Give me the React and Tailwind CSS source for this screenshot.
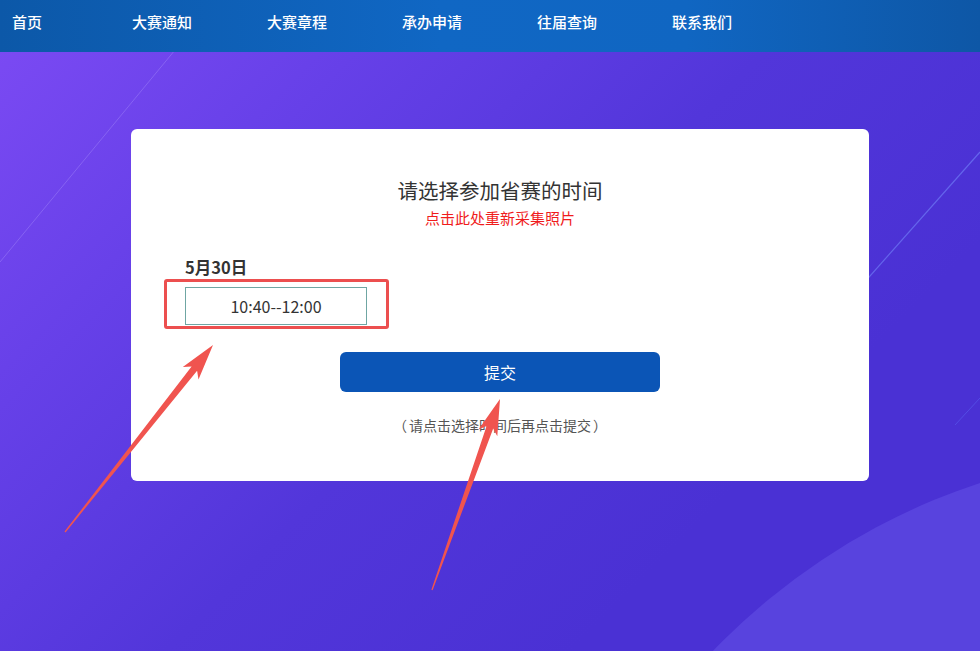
import { useState } from 'react';

const NAV_ITEMS = [
  { label: '首页', w: 'w-[120px]' },
  { label: '大赛通知', w: 'w-[135px]' },
  { label: '大赛章程', w: 'w-[135px]' },
  { label: '承办申请', w: 'w-[135px]' },
  { label: '往届查询', w: 'w-[135px]' },
  { label: '联系我们', w: 'w-[135px]' },
];

// 批注箭头：从 tail 指向 tip，尾部细、头部带倒钩
const arrowPoints = (tail, tip) => {
  const dx = tip[0] - tail[0];
  const dy = tip[1] - tail[1];
  const len = Math.hypot(dx, dy);
  const ux = dx / len;
  const uy = dy / len;
  const nx = -uy;
  const ny = ux;
  const headLen = 30;
  const neck = [tip[0] - ux * headLen, tip[1] - uy * headLen];
  const barb = [tip[0] - ux * (headLen + 6), tip[1] - uy * (headLen + 6)];
  const p = (base, off) => `${(base[0] + nx * off).toFixed(1)},${(base[1] + ny * off).toFixed(1)}`;
  return [
    p(tail, 0.6),
    p(neck, 3.5),
    p(barb, 10),
    `${tip[0]},${tip[1]}`,
    p(barb, -10),
    p(neck, -3.5),
    p(tail, -0.6),
  ].join(' ');
};

const Arrow = ({ tail, tip }) => (
  <polygon points={arrowPoints(tail, tip)} fill="#f0544f" />
);

export default function App() {
  const [selected, setSelected] = useState(false);

  return (
    <div
      className="relative w-[980px] h-[651px] overflow-hidden bg-[linear-gradient(135deg,#7d4bf4_0%,#6640e8_25%,#5236da_50%,#4a31d4_75%,#4a31d4_100%)]"
      style={{ fontFamily: '"Noto Sans CJK SC", "Noto Sans", sans-serif' }}
    >
      {/* 背景装饰：斜线与右下角圆 */}
      <svg className="absolute inset-0 pointer-events-none" width="980" height="651">
        <circle cx="1185" cy="1105" r="655" fill="#5843de" />
        <line x1="0" y1="262" x2="175" y2="50" stroke="#9a7cf8" strokeWidth="1" opacity="0.55" />
        <line x1="760" y1="400" x2="980" y2="152" stroke="#6b72f2" strokeWidth="1.2" opacity="0.8" />
        <line x1="955" y1="425" x2="980" y2="398" stroke="#5a5ff0" strokeWidth="1" opacity="0.6" />
      </svg>

      {/* 顶部导航 */}
      <nav className="relative h-[52px] flex items-start pt-[11px] pl-[12px] bg-[linear-gradient(90deg,#0c58a8_0%,#1067c4_45%,#1066c2_70%,#0e57a6_100%)]">
        {NAV_ITEMS.map((item) => (
          <a key={item.label} className={`${item.w} text-[15px] leading-[22px] font-medium text-white`}>
            {item.label}
          </a>
        ))}
      </nav>

      {/* 选择时间卡片 */}
      <div className="relative ml-[131px] mt-[77px] w-[738px] h-[352px] bg-white rounded-[6px] pt-[46px]">
        <h2 className="text-center text-[20.5px] leading-[30px] text-[#333]">请选择参加省赛的时间</h2>
        <p className="mt-[3px] text-center text-[15px] leading-[20px] text-[#f01c1c] cursor-pointer">
          点击此处重新采集照片
        </p>

        <div className="mt-[28px] pl-[54px]">
          <div className="text-[16.5px] leading-[22px] font-bold text-[#333]">5月30日</div>
          <div className="relative mt-[9px] w-[182px]">
            <div className="absolute -left-[21px] -top-[8px] w-[225px] h-[50px] border-[3px] border-[#ec4f4f] rounded-[3px]" />
            <button
              onClick={() => setSelected(!selected)}
              className={`relative block w-[182px] h-[38px] border border-[#6fa6a3] text-[16px] leading-[36px] text-[#333] ${
                selected ? 'bg-[#eef7f6]' : 'bg-white'
              }`}
            >
              10:40--12:00
            </button>
          </div>
        </div>

        <div className="mt-[27px] flex justify-center">
          <button className="w-[320px] h-[40px] rounded-[6px] bg-[#0b55b6] text-white text-[16px]">
            提交
          </button>
        </div>

        <p className="mt-[23px] flex justify-center text-[14px] leading-[20px] text-[#555]">
          <span className="inline-block w-[16px] text-left">（</span>
          <span>请点击选择时间后再点击提交</span>
          <span className="inline-block w-[16px] text-right">）</span>
        </p>
      </div>

      {/* 红色批注箭头 */}
      <svg className="absolute inset-0 pointer-events-none" width="980" height="651">
        <Arrow tail={[65, 532]} tip={[213, 345]} />
        <Arrow tail={[432, 590]} tip={[500, 399]} />
      </svg>
    </div>
  );
}
